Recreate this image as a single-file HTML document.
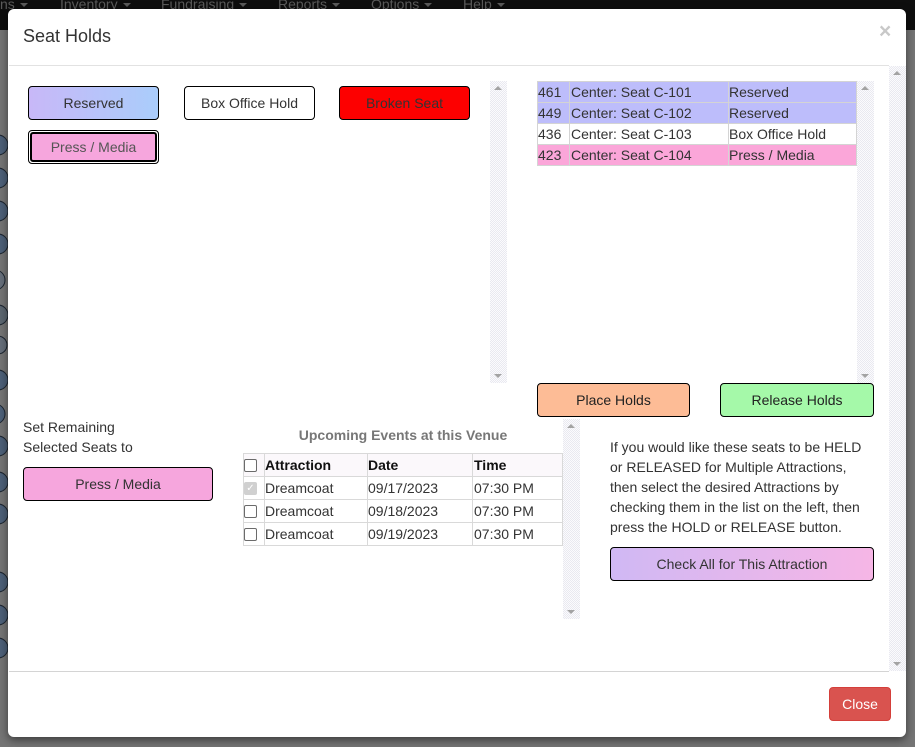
<!DOCTYPE html>
<html><head><meta charset="utf-8"><title>Seat Holds</title>
<style>
html,body{margin:0;padding:0;width:915px;height:747px;overflow:hidden;background:#757575}
*{box-sizing:border-box}
body{font-family:"Liberation Sans",sans-serif;font-size:14px;color:#333;position:relative}
.a{position:absolute}
.top{left:0;top:0;width:915px;height:30px;background:#0e0e0e}
.nav{top:-6px;font-size:14px;line-height:20px;color:#5a5a5a;white-space:nowrap}
.nav u{display:inline-block;width:0;height:0;margin-left:5px;vertical-align:middle;border-left:4px solid transparent;border-right:4px solid transparent;border-top:4px solid #5a5a5a}
.modal{left:8px;top:9px;width:898px;height:728px;background:#fff;border-radius:6px;box-shadow:0 3px 9px rgba(0,0,0,.5)}
.b{position:absolute;border:1px solid #000;border-radius:4px;text-align:center;font-size:14px;color:#333;line-height:32px;height:34px}
.sb{position:absolute;width:17px;background:repeating-conic-gradient(#fbfbfd 0 25%,#e9e9f0 0 50%) 0 0/2px 2px}
.sb i{position:absolute;left:4px;width:0;height:0;border-left:4px solid transparent;border-right:4px solid transparent}
.sb i.u{top:5px;border-bottom:4px solid #a3a3a3}
.sb i.d{bottom:5px;border-top:4px solid #a3a3a3}
.t{position:absolute;border-collapse:collapse;table-layout:fixed;color:#333}
.list td{padding:0 0 0 1px;height:21px;line-height:20px;border:1px solid #d4d4d4;white-space:nowrap;overflow:hidden;font-size:14px}
.list td:first-child{padding-left:0}
.list td:nth-child(3){padding-left:0}
.ev td,.ev th{padding:0;height:23px;line-height:22px;border:1px solid #d9d9d9;white-space:nowrap;text-align:left;font-size:14px;color:#333}
.ev th{color:#111;background:#fbf8fb}
.ev td:nth-child(4),.ev th:nth-child(4){padding-left:1px}
.cb{display:block;width:13px;height:13px;border:1px solid #6b6b6b;border-radius:2px;background:#fff;margin-left:0}
.cb.off{background:#d0d0d0;border-color:#d0d0d0;color:#fff;font-size:10px;line-height:11px;text-align:center}
.p{position:absolute;line-height:20px;font-size:14px;color:#333;white-space:nowrap}
</style></head>
<body>
<div class="a top"></div>
<div class="a nav" style="left:0">ns<u></u></div>
<div class="a nav" style="left:60px">Inventory<u></u></div>
<div class="a nav" style="left:161px">Fundraising<u></u></div>
<div class="a nav" style="left:278px">Reports<u></u></div>
<div class="a nav" style="left:371px">Options<u></u></div>
<div class="a nav" style="left:463px">Help<u></u></div>

<svg class="a" style="left:0;top:30px" width="8" height="717" viewBox="0 30 8 717">
<g fill="#4d6078" stroke="#1c2530" stroke-width="1">
<circle cx="-2" cy="145" r="10"/><circle cx="-2" cy="178" r="10"/><circle cx="-2" cy="211" r="10"/><circle cx="-2" cy="244" r="10"/>
<circle cx="-5" cy="280" r="10" fill="#666f7a"/><circle cx="-2" cy="315" r="10" fill="#5c6670"/><circle cx="-2" cy="345" r="9" fill="#666f7a"/>
<circle cx="-2" cy="380" r="10"/><circle cx="-5" cy="414" r="10"/><circle cx="-2" cy="446" r="10"/><circle cx="-2" cy="482" r="10"/>
<circle cx="-2" cy="514" r="10"/><circle cx="-2" cy="582" r="10"/><circle cx="-2" cy="615" r="10"/><circle cx="-2" cy="648" r="10"/>
</g></svg>

<div class="a modal"></div>
<div class="a" style="left:23px;top:25px;font-size:18px;line-height:22px;color:#333">Seat Holds</div>
<div class="a" style="left:879px;top:20px;font-size:21px;font-weight:bold;line-height:24px;color:#c8c8c8">×</div>
<div class="a" style="left:9px;top:65px;width:880px;height:1px;background:#e2e2e2"></div>
<div class="a" style="left:9px;top:671px;width:880px;height:1px;background:#d4d4d4"></div>

<div class="sb" style="left:889px;top:66px;height:605px"><i class="u"></i><i class="d"></i></div>
<div class="sb" style="left:490px;top:81px;height:302px"><i class="u"></i><i class="d"></i></div>
<div class="sb" style="left:857px;top:81px;height:302px"><i class="u"></i><i class="d"></i></div>
<div class="sb" style="left:563px;top:419px;height:200px"><i class="u"></i><i class="d"></i></div>

<div class="b" style="left:28px;top:86px;width:131px;background:linear-gradient(90deg,#c8b8f8,#aacdfb)">Reserved</div>
<div class="b" style="left:184px;top:86px;width:131px;background:#fff">Box Office Hold</div>
<div class="b" style="left:339px;top:86px;width:131px;background:#fd0000">Broken Seat</div>
<div class="b" style="left:28px;top:130px;width:131px;background:#fff;padding:1px"><div style="height:30px;border:2px solid #000;border-radius:3px;background:#f6a6dd;line-height:26px;color:#555">Press / Media</div></div>

<table class="t list" style="left:537px;top:81px;width:319px">
<colgroup><col style="width:32px"><col style="width:159px"><col style="width:128px"></colgroup>
<tr style="background:#bdbdfb"><td>461</td><td>Center: Seat C-101</td><td>Reserved</td></tr>
<tr style="background:#bdbdfb"><td>449</td><td>Center: Seat C-102</td><td>Reserved</td></tr>
<tr style="background:#fff"><td>436</td><td>Center: Seat C-103</td><td>Box Office Hold</td></tr>
<tr style="background:#fba6d9"><td>423</td><td>Center: Seat C-104</td><td>Press / Media</td></tr>
</table>

<div class="b" style="left:537px;top:383px;width:153px;background:#fdbc96;color:#222">Place Holds</div>
<div class="b" style="left:720px;top:383px;width:154px;background:#a5f9a9;color:#222">Release Holds</div>

<div class="p" style="left:23px;top:417px">Set Remaining</div>
<div class="p" style="left:23px;top:437px">Selected Seats to</div>
<div class="b" style="left:23px;top:467px;width:190px;background:#f6a6dd">Press / Media</div>

<div class="p" style="left:243px;top:425px;width:320px;text-align:center;font-weight:bold;color:#777">Upcoming Events at this Venue</div>
<table class="t ev" style="left:243px;top:453px;width:319px">
<colgroup><col style="width:21px"><col style="width:103px"><col style="width:105px"><col style="width:90px"></colgroup>
<tr><th><span class="cb"></span></th><th>Attraction</th><th>Date</th><th>Time</th></tr>
<tr><td><span class="cb off">✓</span></td><td>Dreamcoat</td><td>09/17/2023</td><td>07:30 PM</td></tr>
<tr><td><span class="cb"></span></td><td>Dreamcoat</td><td>09/18/2023</td><td>07:30 PM</td></tr>
<tr><td><span class="cb"></span></td><td>Dreamcoat</td><td>09/19/2023</td><td>07:30 PM</td></tr>
</table>

<div class="p" style="left:610px;top:437px">If you would like these seats to be HELD</div>
<div class="p" style="left:610px;top:457px">or RELEASED for Multiple Attractions,</div>
<div class="p" style="left:610px;top:477px">then select the desired Attractions by</div>
<div class="p" style="left:610px;top:497px">checking them in the list on the left, then</div>
<div class="p" style="left:610px;top:517px">press the HOLD or RELEASE button.</div>
<div class="b" style="left:610px;top:547px;width:264px;background:linear-gradient(90deg,#d0b8f4,#f6b6e6)">Check All for This Attraction</div>

<div class="b" style="left:829px;top:687px;width:62px;background:#d9534f;border-color:#d43f3a;color:#fff">Close</div>
</body></html>
